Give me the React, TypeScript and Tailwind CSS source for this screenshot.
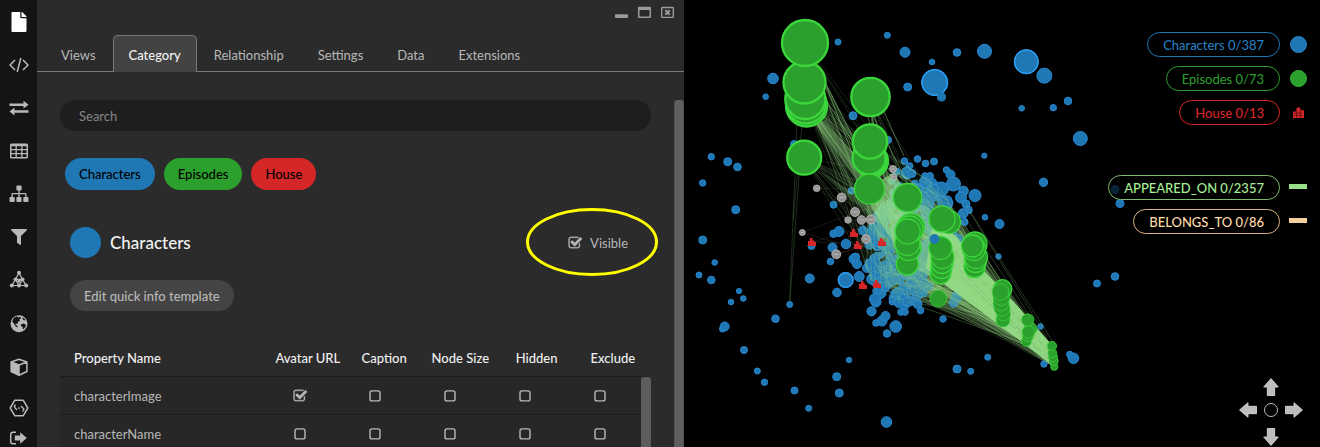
import React, { useState } from "react";
import { FaFile, FaFilter } from "react-icons/fa";

type Point = [number, number];
type Disc = [number, number, number];

const CHECK_PATH =
  "M1472 930v318q0 119-84.5 203.5t-203.5 84.5h-832q-119 0-203.5-84.5t-84.5-203.5v-832q0-119 84.5-203.5t203.5-84.5h832q63 0 117 25 15 7 18 23 3 17-9 29l-49 49q-10 10-23 10-3 0-9-2-23-6-45-6h-832q-66 0-113 47t-47 113v832q0 66 47 113t113 47h832q66 0 113-47t47-113v-254q0-13 9-22l64-64q10-10 23-10 6 0 12 3 20 8 20 29zm231-489l-814 814q-24 24-57 24t-57-24l-430-430q-24-24-24-57t24-57l110-110q24-24 57-24t57 24l263 263 647-647q24-24 57-24t57 24l110 110q24 24 24 57t-24 57z";

function CheckBox({ id, label, initial = false }: { id: string; label?: string; initial?: boolean }) {
  const [on, setOn] = useState(initial);
  return (
    <span className="inline-grid size-4 place-items-center">
      <input
        id={id}
        type="checkbox"
        checked={on}
        onChange={() => setOn(!on)}
        aria-label={label}
        className="col-start-1 row-start-1 size-4 cursor-pointer appearance-none"
      />
      <svg viewBox="0 0 16 16" className="pointer-events-none col-start-1 row-start-1 size-4 text-[#b8b8b8]">
        {on ? (
          <path d={CHECK_PATH} transform="translate(1 .8) scale(.0081)" fill="currentColor" stroke="currentColor" strokeWidth="40" />
        ) : (
          <rect x="3" y="2.9" width="10" height="10" rx="2" fill="none" stroke="currentColor" strokeWidth="1.4" />
        )}
      </svg>
    </span>
  );
}

/* ---------- sidebar ---------- */

const svgBox = "h-5 w-5";

const tools: { name: string; icon: React.ReactNode }[] = [
  { name: "File", icon: <FaFile className="h-5 w-[18px] text-white" /> },
  {
    name: "Query",
    icon: (
      <svg viewBox="0 0 20 20" className={svgBox} fill="none" stroke="currentColor" strokeWidth="1.5">
        <path d="M6 5 1 10l5 5M14 5l5 5-5 5M11.8 3 8.2 17" />
      </svg>
    ),
  },
  {
    name: "Swap",
    icon: (
      <svg viewBox="0 0 20 20" className={svgBox} fill="currentColor">
        <path d="M.5 5.500h14V2.800l5 3.900-5 3.900V7.900H.5zM19.500 12.300h-14V9.600l-5 3.900 5 3.900v-2.700h14z" />
      </svg>
    ),
  },
  {
    name: "Table",
    icon: (
      <svg viewBox="0 0 20 20" className={svgBox} fill="currentColor" fillRule="evenodd">
        <path d="M2.500 2.500h15A1.500 1.500 0 0 1 19 4v12a1.500 1.500 0 0 1-1.500 1.500h-15A1.500 1.500 0 0 1 1 16V4a1.500 1.500 0 0 1 1.500-1.500zM2.500 5.300v2.800h4V5.300zm5.300 0v2.800h4.400V5.300zm5.700 0v2.800h4V5.300zM2.500 9.300V12h4V9.300zm5.300 0V12h4.400V9.300zm5.700 0V12h4V9.300zM2.500 13.300V16h4v-2.700zm5.300 0V16h4.400v-2.700zm5.700 0V16h4v-2.700z" />
      </svg>
    ),
  },
  {
    name: "Hierarchy",
    icon: (
      <svg viewBox="0 0 20 20" className={svgBox} fill="currentColor">
        <rect x="7.400" y="1.500" width="5.200" height="5" rx="1" />
        <rect x=".5" y="13" width="5.200" height="5" rx="1" />
        <rect x="7.400" y="13" width="5.200" height="5" rx="1" />
        <rect x="14.300" y="13" width="5.200" height="5" rx="1" />
        <path d="M10 6v7M3.100 13V10.500q0-.8.8-.8h12.200q.8 0 .8.8V13" fill="none" stroke="currentColor" strokeWidth="1.300" />
      </svg>
    ),
  },
  { name: "Filter", icon: <FaFilter className="h-4 w-4" /> },
  {
    name: "Graph",
    icon: (
      <svg viewBox="0 0 20 20" className={svgBox} fill="currentColor">
        <path d="M10 3 3 15.500h14zM6.500 9.300h7L10 15.500z" fill="none" stroke="currentColor" strokeWidth="1.200" />
        <circle cx="10" cy="2.800" r="2" />
        <circle cx="6.500" cy="9.300" r="1.900" />
        <circle cx="13.500" cy="9.300" r="1.900" />
        <circle cx="10" cy="11" r="1.800" />
        <circle cx="2.800" cy="15.500" r="2" />
        <circle cx="10" cy="15.500" r="1.900" />
        <circle cx="17.200" cy="15.500" r="2" />
      </svg>
    ),
  },
  {
    name: "Map",
    icon: (
      <svg viewBox="0 0 20 20" className={svgBox}>
        <circle cx="10" cy="10.800" r="8.500" fill="currentColor" />
        <path
          d="M3.200 8.400 4.700 5l3-1.700L9.200 4.500l2-.7.900 1.500-1.700 1.200.5 1.500-2.100 1.100-.2 1.800-1.700-.3-.4 1.400 2 .8-.1 1.800-2-1.300-1.100-2.300zM13 4.200l2.600 1.500.9 1.900-2.200-.5zM12 11.400l2.300-.9 2.700 1.200-.8 2.600-2 2.200-.7-2.700-1.700-.8z"
          fill="#141414"
        />
      </svg>
    ),
  },
  {
    name: "Scene",
    icon: (
      <svg viewBox="0 0 20 20" className={svgBox} fill="currentColor">
        <path d="M10 3.200 17.900 6 10 9 2.100 6zM10 9v10.300M17.900 6v9.500L10 19.200 2.100 15.500V6" fill="none" stroke="currentColor" strokeWidth="1.500" strokeLinejoin="round" />
        <path d="M2.100 6 10 9v10.200l-7.900-3.700z" />
      </svg>
    ),
  },
  {
    name: "Plugins",
    icon: (
      <svg viewBox="0 0 20 20" className={svgBox} fill="none" stroke="currentColor" strokeWidth="1.500">
        <path d="M5.700 1.300h8.600l4.500 7.700-4.500 7.700H5.700L1.200 9z" strokeLinejoin="round" />
        <path d="M5.200 7.900 8 11M6.500 5.600 5.200 8.100M12 7l2.900 3-1.300 2.500" strokeWidth="1.400" />
        <circle cx="10" cy="9.100" r=".9" fill="currentColor" stroke="none" />
      </svg>
    ),
  },
];

function Sidebar() {
  return (
    <nav className="flex flex-col overflow-hidden bg-[#141414] text-[#b9b9b9]" aria-label="Tools">
      {tools.map((t) => (
        <button key={t.name} type="button" aria-label={t.name} className="flex h-[43px] shrink-0 items-center justify-center">
          {t.icon}
        </button>
      ))}
      <button type="button" aria-label="Log out" className="flex h-4 shrink-0 items-center justify-center">
        <svg viewBox="0 0 20 16" className="h-4 w-5">
          <path d="M7 2.200H4Q1.700 2.200 1.700 4.500v7Q1.700 13.800 4 13.800H7" fill="none" stroke="currentColor" strokeWidth="1.500" />
          <path d="M5.800 5.400h5.400V2.200l6.600 5.800-6.600 5.800v-3.200H5.800z" fill="currentColor" />
        </svg>
      </button>
    </nav>
  );
}

/* ---------- settings panel ---------- */

const tabs = ["Views", "Category", "Relationship", "Settings", "Data", "Extensions"];
const columns = ["Avatar URL", "Caption", "Node Size", "Hidden", "Exclude"];
const rows = [
  { name: "characterImage", checked: "Avatar URL" },
  { name: "characterName", checked: "" },
];

function WindowButtons() {
  return (
    <div className="flex h-[35px] items-start justify-end gap-[10px] pt-[6px] pr-[10px] text-[#9a9a9a]">
      <button type="button" aria-label="Minimize">
        <svg viewBox="0 0 13 13" className="size-[13px]">
          <rect y="8.200" width="13" height="3.800" rx="1" fill="currentColor" />
        </svg>
      </button>
      <button type="button" aria-label="Maximize">
        <svg viewBox="0 0 13 13" className="size-[13px]" fillRule="evenodd">
          <path d="M1 .8h11a1 1 0 0 1 1 1V11a1 1 0 0 1-1 1H1a1 1 0 0 1-1-1V1.800a1 1 0 0 1 1-1zM1.500 4v6.600h10V4z" fill="currentColor" />
        </svg>
      </button>
      <button type="button" aria-label="Close">
        <svg viewBox="0 0 13 13" className="size-[13px]" fill="none" stroke="currentColor">
          <rect x=".7" y="1.500" width="11.600" height="9.900" rx=".6" strokeWidth="1.400" />
          <path d="m4.300 4.300 4.400 4.400m0-4.400L4.300 8.700" strokeWidth="2" />
        </svg>
      </button>
    </div>
  );
}

function Panel() {
  const [active, setActive] = useState("Category");
  return (
    <main className="flex min-w-0 flex-col overflow-hidden bg-[#2b2b2b] text-[#b8b8b8]">
      <WindowButtons />
      <div role="tablist" className="flex h-[37px] shrink-0 border-b border-[#7a7a7a] pl-[7px]">
        {tabs.map((t) => (
          <button
            key={t}
            type="button"
            role="tab"
            aria-selected={t === active}
            onClick={() => setActive(t)}
            className={
              t === active
                ? "-mb-px h-[37px] rounded-t-[5px] border border-b-0 border-[#7a7a7a] bg-[#434343] px-[15px] pt-px font-medium text-[#f2f2f2]"
                : "px-[17px] pt-[3px]"
            }
          >
            {t}
          </button>
        ))}
      </div>

      <div className="flex min-h-0 flex-1 pt-7">
        <div className="min-w-0 flex-1 px-[23px]">
          <input
            type="search"
            aria-label="Search"
            placeholder="Search"
            className="block h-[31px] w-full rounded-full bg-[#1e1e1e] px-[19px] text-[#d0d0d0] outline-none placeholder:text-[#858585]"
          />
          <div className="mt-[27px] flex gap-[9px] pl-[5px] font-medium text-black">
            <button type="button" className="h-8 rounded-full bg-[#1f77b4] px-[14px]">Characters</button>
            <button type="button" className="h-8 rounded-full bg-[#2ca02c] px-[14px]">Episodes</button>
            <button type="button" className="h-8 rounded-full bg-[#d62728] px-[14px]">House</button>
          </div>

          <div className="mt-[37px] flex h-[31px] items-center pl-[10px]">
            <span className="size-[31px] rounded-full bg-[#1f77b4]" />
            <h2 className="ml-[9px] flex-1 text-[17px] font-medium text-[#f4f4f4]">Characters</h2>
            <div className="relative mr-[23px] flex items-center gap-[7px]">
              <CheckBox id="visible" initial />
              <label htmlFor="visible">Visible</label>
              <svg viewBox="0 0 134 70" className="pointer-events-none absolute -top-[26px] -left-[42px] h-[70px] w-[134px] max-w-none">
                <ellipse cx="67" cy="35" rx="64.500" ry="32.500" fill="none" stroke="#ffff00" strokeWidth="3" />
              </svg>
            </div>
          </div>

          <button type="button" className="mt-[22px] ml-[10px] block h-[31px] rounded-full bg-[#444444] px-[14px] font-medium">
            Edit quick info template
          </button>

          <div className="relative mt-[27px]">
            <table className="block w-full">
              <thead className="block">
                <tr className="grid h-[38px] grid-cols-[2.75fr_repeat(5,1fr)] items-center pt-[2px]">
                  <th className="pl-[14px] text-left font-medium text-[#f0f0f0]">Property Name</th>
                  {columns.map((c) => (
                    <th key={c} className="text-center font-medium whitespace-nowrap text-[#f0f0f0]">{c}</th>
                  ))}
                </tr>
              </thead>
              <tbody className="block bg-[#272727] pr-[10px]">
                {rows.map((r) => (
                  <tr key={r.name} className="grid h-[38px] grid-cols-[2.75fr_repeat(5,1fr)] items-center border-t border-[#1c1c1c]">
                    <td className="pl-[14px]">{r.name}</td>
                    {columns.map((c) => (
                      <td key={c} className="flex justify-center pr-[7px]">
                        <CheckBox id={r.name + c} label={`${r.name} ${c}`} initial={r.checked === c} />
                      </td>
                    ))}
                  </tr>
                ))}
              </tbody>
            </table>
            <div className="absolute top-[39px] right-0 bottom-0 w-[10px] rounded-t-[3px] bg-[#5c5c5c]" />
          </div>
        </div>
        <div className="w-[10px] rounded-t-[3px] border-x border-[#515151] bg-[#5e5e5e]" />
      </div>
    </main>
  );
}

/* ---------- graph ---------- */

const loneCharacters: Disc[] = [
  [838, 42, 3], [887.3, 35.300, 3], [905, 52.300, 5], [773, 78.500, 5.300], [765.700, 96.700, 2.800], [907.700, 87, 4],
  [853, 115.700, 4], [888, 140, 3.500], [794, 144, 3.500], [711.300, 156.700, 3.200], [727.700, 161.700, 4], [737.500, 167, 3.800],
  [702.700, 183, 3.200], [735.700, 209.700, 4], [957, 52.500, 3.800], [932, 62, 2.800], [984.500, 51.300, 7], [1026.300, 61.700, 12],
  [1044.300, 75.700, 7.500], [934.700, 82.500, 13], [941.500, 97, 4], [1021.700, 108.300, 2.800], [1053.300, 107.700, 3.200],
  [1068, 101, 3.800], [1080.300, 138.500, 7], [984.300, 155.700, 2.600], [1043.500, 182.300, 4.200], [1115, 189.500, 4], [1120, 203.500, 4],
  [999.500, 224, 4.500], [985, 217.300, 2.800], [998.500, 256.500, 2.700], [702.700, 240, 4], [714.700, 262.500, 2.800], [699, 275, 3],
  [711.300, 280, 3.800], [739, 291, 2.600], [743.300, 298.500, 2.800], [731, 302, 2.800], [722.500, 329, 3], [724.700, 326.500, 4.500],
  [744, 350, 3.500], [757.300, 371, 3], [764.500, 382.300, 3.200], [794.500, 390.500, 3.500], [808.700, 408.300, 3], [775.500, 318.700, 3.800],
  [789.700, 304.500, 3], [849, 360, 2.700], [836.700, 376.700, 4], [839.300, 393, 4], [886.500, 422, 5.300], [957, 369, 4],
  [970.700, 371.300, 3], [987.700, 357.300, 3], [1044, 364, 3.200], [1069.700, 354.500, 3.200], [1073.500, 358.300, 5.300],
  [1040.500, 326.500, 2.800], [1097, 283.500, 3.500], [1115, 276.500, 3.800], [943, 319, 3.200], [809.700, 278.500, 4.500],
  [845.700, 280, 7.500], [859.200, 276.500, 5], [837, 292.500, 4.300], [833.500, 204.700, 3.500], [851.500, 190.700, 3.300],
  [833.500, 233.700, 3.700], [839, 231.500, 5], [846, 244, 4.800], [832.500, 247.500, 4.500], [830.500, 261.500, 3.300], [811.500, 246, 3.500],
  [854, 259, 5], [857, 264, 4.600], [855.500, 257, 4], [863, 230.500, 4.500], [873, 230, 4.300], [874.500, 259, 5], [872.500, 266, 4.500],
  [895.700, 326.500, 5.800], [887, 333.500, 3.700], [871.500, 311.300, 4.600], [882, 321, 5], [885.500, 316, 4.500], [876, 323, 3.300],
  [876, 302, 5], [880.500, 293, 5.500], [875, 299, 5.500], [892.500, 301.500, 3.500], [898, 303, 3.700], [901, 312, 3.300], [905, 312, 3.300],
  [909.500, 301, 5], [917.500, 304, 4.500], [920.500, 310.500, 3.300], [953.500, 303, 4.300], [956.500, 297, 5], [958, 293, 4],
];

const upperCharacters: Disc[] = [
  [904.500, 161, 3.300], [917.500, 159, 3.300], [925.500, 163.500, 3.300], [934, 161.500, 3.500], [909.500, 166, 3.300], [907, 173, 6],
  [912, 173.500, 4], [897, 171.500, 3.300], [925, 176, 3.300], [930, 176, 3.500], [926, 183, 4.500], [919, 188, 4], [946.500, 170, 3.300],
  [950.500, 174.500, 4.500], [953.500, 184, 7], [941.500, 189, 7], [963.500, 191, 4.800], [975, 195.500, 6], [945, 203, 7.300],
  [961, 197.500, 5.500], [966, 204, 4], [968.500, 210, 3.800], [963, 213.500, 4.800], [964.500, 222, 3.500], [933, 194, 4], [930, 201, 4.300],
  [927, 206, 4.800], [923, 181, 3.500], [926, 213, 5], [934, 189, 4.500], [892, 181, 3.500], [899, 187, 4.500], [953, 233, 4],
  [958, 239, 4.500], [954, 267, 3.300], [949, 241, 4],
];

const unnamed: Disc[] = [
  [816.700, 188.300, 3.300], [841.700, 197.500, 4.500], [855, 212, 4.500], [848, 220, 3.200], [861.500, 220, 4.300], [871, 219.500, 4.500],
  [802.300, 232.500, 3], [866, 239, 4.400], [836.300, 254.300, 4.500], [894, 177, 3], [893, 169, 3.500],
];

const houses: Point[] = [[812, 242], [854, 233], [858, 245], [863, 285], [877, 284], [882, 242]];

const episodes: Disc[] = [
  [806.500, 106, 21], [806, 103.500, 20.500], [805.300, 99, 20.500], [804.500, 82.500, 21.500], [805, 43, 23.500],
  [804.200, 157.700, 17.500], [870.500, 97, 19.700], [872, 161, 16.500], [870.500, 160, 16.500], [869, 158, 17], [870, 141.500, 17.700],
  [869.500, 189, 15], [907.500, 197.700, 14.200], [907.300, 264, 11], [908.500, 248, 12.500], [907.500, 243, 12.500], [911, 227, 13.500],
  [909.500, 229.500, 13.500], [907.700, 231.500, 12.500], [949, 222, 11.500], [942, 219, 13], [940.500, 273.500, 10.300],
  [941.500, 268, 10.500], [942, 262.500, 11], [942.500, 257, 11.500], [940.500, 248, 11.500], [938.300, 298.700, 8.500],
  [974.500, 267, 10.500], [975.500, 262, 10.500], [976, 257, 11.500], [975, 244, 12], [974, 249, 11.500], [972.500, 246, 11],
  [1003, 320, 7], [1003.500, 314, 7], [1002, 308, 8], [1001, 303, 8], [1001.500, 297, 8.500], [1002.500, 289, 9.300], [1000.500, 292, 8.300],
  [1026.300, 341.500, 5], [1028, 336, 5.500], [1030.500, 329, 6.500], [1028.500, 332, 6.300], [1027.700, 320, 6.200],
  [1054.300, 366.700, 3.700], [1054, 361, 4.300], [1053, 357, 4.600], [1052.300, 353, 4.500], [1052, 346, 4.700],
];

function makeRandom(seed: number) {
  let s = seed;
  return () => {
    s = (s * 1664525 + 1013904223) % 4294967296;
    return s / 4294967296;
  };
}

const random = makeRandom(20);

function clusterPoint(): Point {
  const a = random() * Math.PI * 2;
  const d = Math.sqrt(random());
  const dy = Math.sin(a) * d * 64;
  return [909 + Math.cos(a) * d * 42 - dy * 0.18, 243 + dy];
}

const cluster: Disc[] = Array.from({ length: 290 }, () => {
  const [x, y] = clusterPoint();
  return [x, y, 2.8 + random() * 2];
});

function linesFrom(list: Disc[], count: number) {
  let d = "";
  for (const [x, y] of list) {
    for (let i = 0; i < count; i++) {
      const target = cluster[Math.floor(random() * cluster.length)];
      d += `M${x.toFixed(1)} ${y.toFixed(1)}L${target[0].toFixed(1)} ${target[1].toFixed(1)}`;
    }
  }
  return d;
}

const farLines = linesFrom(episodes.slice(0, 12), 18);
const nearLines = linesFrom(episodes.slice(12), 28);
const houseLines = linesFrom([...houses, ...unnamed.slice(0, 9)].map(([x, y]) => [x, y, 1] as Disc), 2);

function Discs({ items, fill, stroke, width = 1 }: { items: Disc[]; fill: string; stroke: string; width?: number }) {
  return (
    <g fill={fill} stroke={stroke} strokeWidth={width}>
      {items.map(([x, y, r], i) => (
        <circle key={i} cx={x} cy={y} r={r} />
      ))}
    </g>
  );
}

const BUILDING = "M0 10V4h3V1.500L5 0l2 1.500V3h3v7z";

function Graph() {
  return (
    <svg viewBox="684 0 636 447" preserveAspectRatio="xMinYMin meet" className="absolute inset-0 h-full w-full" role="img" aria-label="Graph of characters, episodes and houses">
      <g fill="none" stroke="#98df8a" strokeWidth=".5">
        <path d="M797 125 789.500 304M802 125 793 220M799 175 789.700 304" opacity=".4" />
        <path d={houseLines} stroke="#c99a72" opacity=".28" />
        <path d={nearLines} opacity=".22" />
      </g>
      <Discs items={loneCharacters} fill="#1f77b4" stroke="#2687d0" />
      <Discs items={cluster} fill="#1f77b4" stroke="#2b8bd0" width={0.8} />
      <Discs items={upperCharacters} fill="#1f77b4" stroke="#2b8bd0" />
      <g fill="#1f77b4" stroke="#2b9df0" strokeWidth="1.500">
        <circle cx="1026.300" cy="61.700" r="11.700" />
        <circle cx="934.700" cy="82.500" r="12.700" />
        <circle cx="845.700" cy="280" r="7.300" />
      </g>
      <circle cx="941.500" cy="97" r="4" fill="#1f77b4" stroke="#2374aa" />
      <g fill="#98df8a">
        <path d="M862 192 894 172 912 206 905 262 889 236z" opacity=".66" />
        <path d="M816 124 825 120 880 184 868 196z" opacity=".4" />
        <path d="M818 170 828 176 880 214 884 228z" opacity=".25" />
        <path d="M886 200 925 205 955 236 950 287 922 272 893 246z" opacity=".42" />
        <path d="M932 228 955 235 984 271 1014 302 1051 344 1049 363 1023 343 948 287 926 268z" opacity=".95" />
      </g>
      <g fill="none" stroke="#98df8a">
        <path d={farLines} strokeWidth=".6" opacity=".26" />
        <path d={nearLines} strokeWidth=".5" opacity=".13" />
        <path d="M826 84 869 170M827 88 861 176M824 97 884 190M874 117 911 190M884 112 904 156M868 117 872 132" strokeWidth=".9" opacity=".5" />
        <path d="M966 205 1053 342M970 212 1047 338M960 210 1030 316M962 221 1000 280M950 300 1020 342M942 305 1048 361M930 285 1030 345M925 279 1044 358" strokeWidth=".7" opacity=".35" />
        <path d="M952 262 1048 358M955 252 1048 350M960 276 1040 352" stroke="#5e9a54" strokeWidth=".6" opacity=".6" strokeDasharray="7 3" />
      </g>
      <g stroke="#c2c2c2" strokeWidth=".8">
        {unnamed.map(([x, y, r], i) => (
          <g key={i}>
            <circle cx={x} cy={y} r={r} fill="#929292" />
            <path d={`M${x - r / 2} ${y}h${r}`} />
          </g>
        ))}
      </g>
      <g fill="#d62728">
        {houses.map(([x, y]) => (
          <path key={x} d="M-4 4v-5h1.800v-3h2.800v2.400h1.600v1.600h1.800v4z" transform={`translate(${x} ${y})`} />
        ))}
      </g>
      <g fill="#2ca02c" stroke="#3bd63b">
        {episodes.map(([x, y, r], i) => (
          <circle key={i} cx={x} cy={y} r={r > 15 ? r - 0.5 : r} strokeWidth={r > 15 ? 2.3 : r > 9 ? 1.3 : 0.7} />
        ))}
      </g>
      <circle cx="934.500" cy="239" r="4.500" fill="#1f77b4" stroke="#2277aa" />
    </svg>
  );
}

const pill = "flex h-[25px] items-center rounded-full border bg-black/70 px-[15px] whitespace-nowrap";

function LegendRow({ tone, text, children }: { tone: string; text: string; children: React.ReactNode }) {
  return (
    <li className="flex items-center gap-[9px]">
      <button type="button" className={`${pill} ${tone}`}>{text}</button>
      <span className="flex w-[18px] justify-center">{children}</span>
    </li>
  );
}

function Arrow({ label, turn }: { label: string; turn: string }) {
  return (
    <button type="button" aria-label={label}>
      <svg viewBox="0 0 18 18" className={`size-[18px] ${turn}`}>
        <path d="M9 .5 16.300 9h-3.600v8.500H5.300V9H1.700z" fill="#bdbdbd" stroke="#dedede" strokeWidth=".8" />
      </svg>
    </button>
  );
}

function GraphView() {
  return (
    <section className="relative min-w-0 overflow-hidden bg-black">
      <Graph />
      <div className="absolute top-[32px] right-[13px] flex flex-col gap-[50px]">
        <ul className="flex flex-col items-end gap-[9px]">
          <LegendRow tone="border-[#1f77b4] text-[#2484c8]" text="Characters 0/387">
            <span className="size-[17px] rounded-full border border-[#2484c8] bg-[#1f77b4]" />
          </LegendRow>
          <LegendRow tone="border-[#2ca02c] text-[#2ca02c]" text="Episodes 0/73">
            <span className="size-[17px] rounded-full border border-[#35b535] bg-[#2ca02c]" />
          </LegendRow>
          <LegendRow tone="border-[#d62728] text-[#e0282b]" text="House 0/13">
            <svg viewBox="0 0 10 10" className="size-[11px]">
              <path d={BUILDING} fill="#d62728" />
              <path d="M1 5.500h8M1 7.500h8M3.300 4v6M6.700 3v7" stroke="#000" strokeWidth=".6" strokeDasharray="1.200 .8" />
            </svg>
          </LegendRow>
        </ul>
        <ul className="flex flex-col items-end gap-[9px] font-medium">
          <LegendRow tone="border-[#7cbc6e] text-[#a5ee96]" text="APPEARED_ON 0/2357">
            <span className="mb-[3px] h-[5px] w-[18px] bg-[#98df8a]" />
          </LegendRow>
          <LegendRow tone="border-[#d9b27c] text-[#ffdca8]" text="BELONGS_TO 0/86">
            <span className="mb-[3px] h-[5px] w-[18px] bg-[#f3cf9d]" />
          </LegendRow>
        </ul>
      </div>
      <div className="absolute right-[17px] bottom-px grid grid-cols-[18px_28px_18px] grid-rows-[18px_32px_18px] place-items-center">
        <span className="col-start-2 flex"><Arrow label="Pan up" turn="rotate-0" /></span>
        <span className="col-start-1 row-start-2 flex pb-1"><Arrow label="Pan left" turn="-rotate-90" /></span>
        <span className="col-start-2 row-start-2 flex pb-1">
          <button type="button" aria-label="Center" className="size-[14px] rounded-full border border-[#bdbdbd]" />
        </span>
        <span className="col-start-3 row-start-2 flex pb-1"><Arrow label="Pan right" turn="rotate-90" /></span>
        <span className="col-start-2 row-start-3 flex"><Arrow label="Pan down" turn="rotate-180" /></span>
      </div>
    </section>
  );
}

export default function App() {
  return (
    <div className="grid h-screen grid-cols-[37px_minmax(0,647fr)_minmax(0,636fr)] grid-rows-[minmax(0,1fr)] overflow-hidden bg-black font-['Lato','Liberation_Sans',sans-serif] text-[13px] leading-5">
      <Sidebar />
      <Panel />
      <GraphView />
    </div>
  );
}
